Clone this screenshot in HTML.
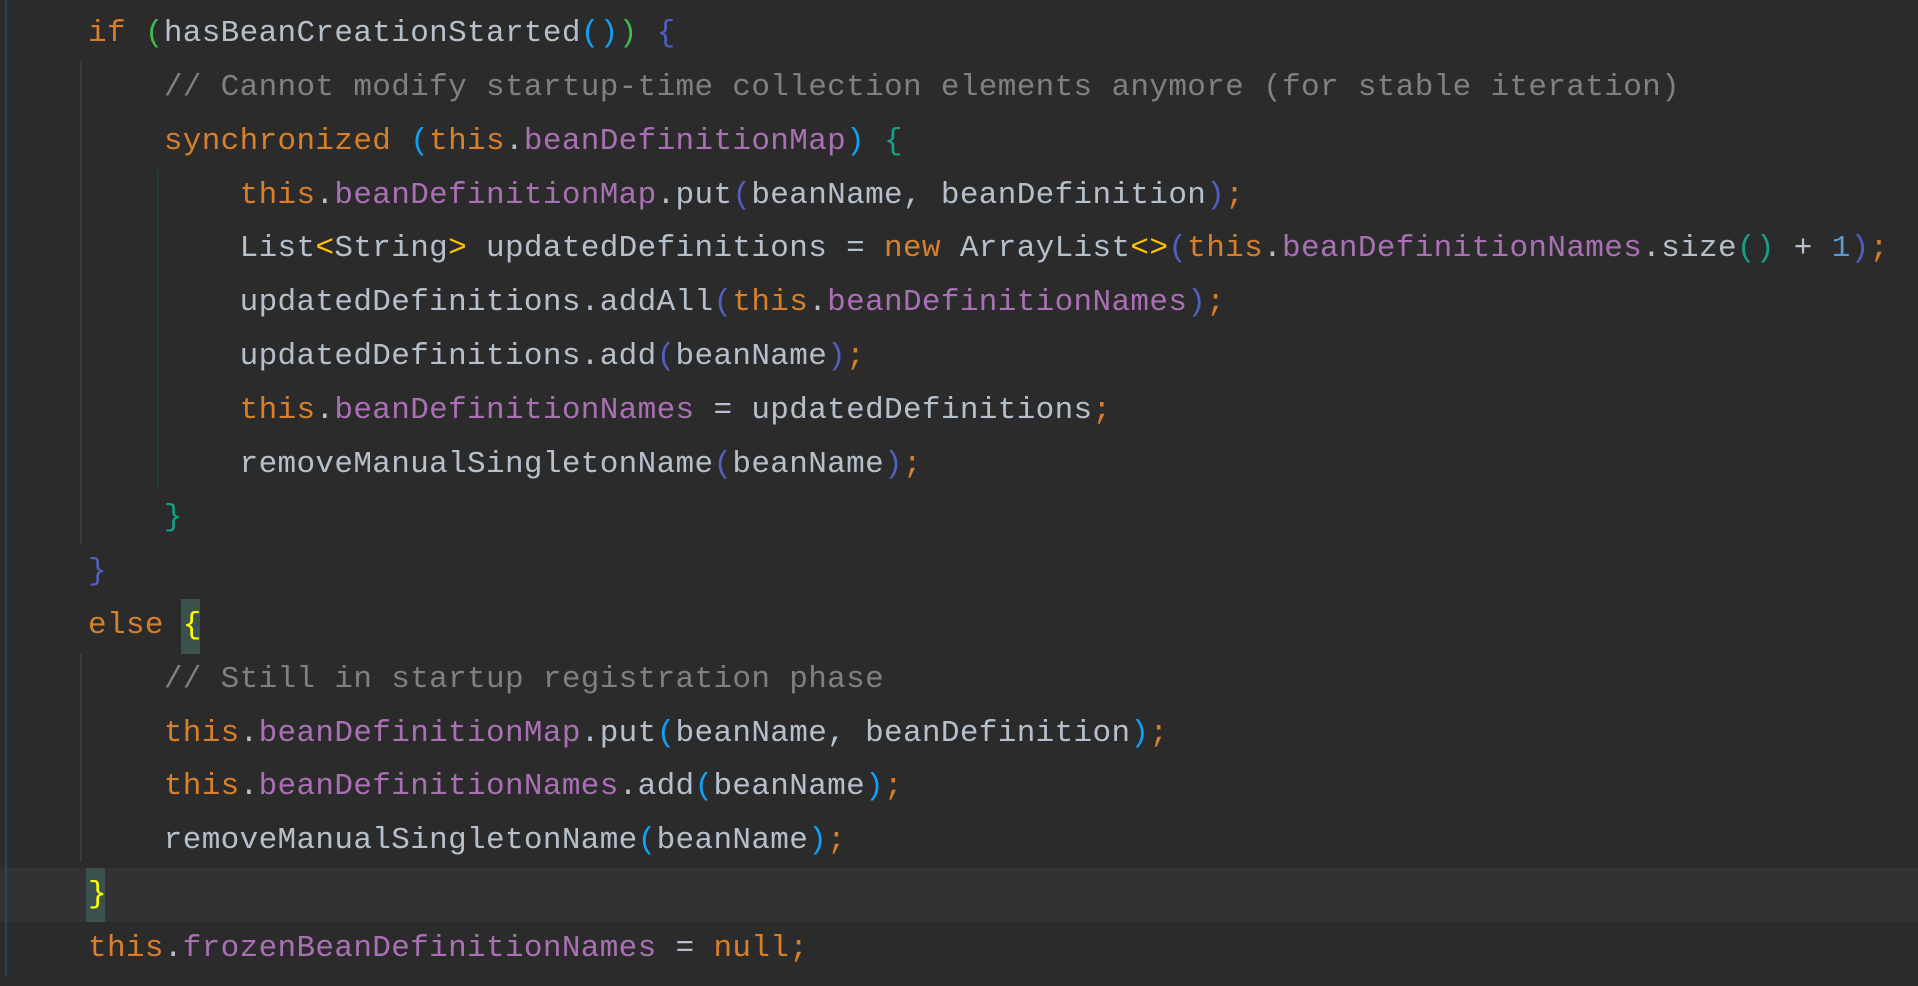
<!DOCTYPE html>
<html><head><meta charset="utf-8"><style>
html,body{margin:0;padding:0;background:#2b2b2b;width:1918px;height:986px;overflow:hidden;position:relative}
.l{position:absolute;left:88px;height:54px;line-height:54px;white-space:pre;font-family:"Liberation Mono",monospace;font-size:31px;letter-spacing:0.35px;color:#b5c0cc}
.k{color:#d77f2b}.f{color:#a970b4}.c{color:#80807f}.n{color:#5b9bd0}
.g{color:#3fb94d}.b{color:#10a0f5}.i{color:#5060c0}.t{color:#16a085}.y{color:#ffc400}.yy{color:#ffff00}
.guide{position:absolute;width:2px}
.box{position:absolute;background:#3b514d}
</style></head><body>
<div style="position:absolute;left:0;top:868px;width:1918px;height:54px;background:#323232"></div>
<div class="guide" style="left:5px;top:0;height:975px;background:#2e4358"></div>
<div class="guide" style="left:80px;top:61px;height:483px;background:#3a3a3a"></div>
<div class="guide" style="left:157px;top:169px;height:320px;background:#233a33"></div>
<div class="guide" style="left:80px;top:654px;height:208px;background:#3a3a3a"></div>
<div class="box" style="left:181px;top:599px;width:19px;height:55px"></div>
<div class="box" style="left:86px;top:868px;width:19px;height:54px"></div>
<div class="l" style="top:7px"><span class="k">if </span><span class="g">(</span>hasBeanCreationStarted<span class="b">()</span><span class="g">)</span> <span class="i">{</span></div>
<div class="l" style="top:61px">    <span class="c">// Cannot modify startup-time collection elements anymore (for stable iteration)</span></div>
<div class="l" style="top:115px">    <span class="k">synchronized </span><span class="b">(</span><span class="k">this</span>.<span class="f">beanDefinitionMap</span><span class="b">)</span> <span class="t">{</span></div>
<div class="l" style="top:169px">        <span class="k">this</span>.<span class="f">beanDefinitionMap</span>.put<span class="i">(</span>beanName, beanDefinition<span class="i">)</span><span class="k">;</span></div>
<div class="l" style="top:222px">        List<span class="y">&lt;</span>String<span class="y">&gt;</span> updatedDefinitions = <span class="k">new </span>ArrayList<span class="y">&lt;&gt;</span><span class="i">(</span><span class="k">this</span>.<span class="f">beanDefinitionNames</span>.size<span class="t">()</span> + <span class="n">1</span><span class="i">)</span><span class="k">;</span></div>
<div class="l" style="top:276px">        updatedDefinitions.addAll<span class="i">(</span><span class="k">this</span>.<span class="f">beanDefinitionNames</span><span class="i">)</span><span class="k">;</span></div>
<div class="l" style="top:330px">        updatedDefinitions.add<span class="i">(</span>beanName<span class="i">)</span><span class="k">;</span></div>
<div class="l" style="top:384px">        <span class="k">this</span>.<span class="f">beanDefinitionNames</span> = updatedDefinitions<span class="k">;</span></div>
<div class="l" style="top:438px">        removeManualSingletonName<span class="i">(</span>beanName<span class="i">)</span><span class="k">;</span></div>
<div class="l" style="top:491px">    <span class="t">}</span></div>
<div class="l" style="top:545px"><span class="i">}</span></div>
<div class="l" style="top:599px"><span class="k">else </span><span class="yy">{</span></div>
<div class="l" style="top:653px">    <span class="c">// Still in startup registration phase</span></div>
<div class="l" style="top:707px">    <span class="k">this</span>.<span class="f">beanDefinitionMap</span>.put<span class="b">(</span>beanName, beanDefinition<span class="b">)</span><span class="k">;</span></div>
<div class="l" style="top:760px">    <span class="k">this</span>.<span class="f">beanDefinitionNames</span>.add<span class="b">(</span>beanName<span class="b">)</span><span class="k">;</span></div>
<div class="l" style="top:814px">    removeManualSingletonName<span class="b">(</span>beanName<span class="b">)</span><span class="k">;</span></div>
<div class="l" style="top:868px"><span class="yy">}</span></div>
<div class="l" style="top:922px"><span class="k">this</span>.<span class="f">frozenBeanDefinitionNames</span> = <span class="k">null;</span></div>
</body></html>
